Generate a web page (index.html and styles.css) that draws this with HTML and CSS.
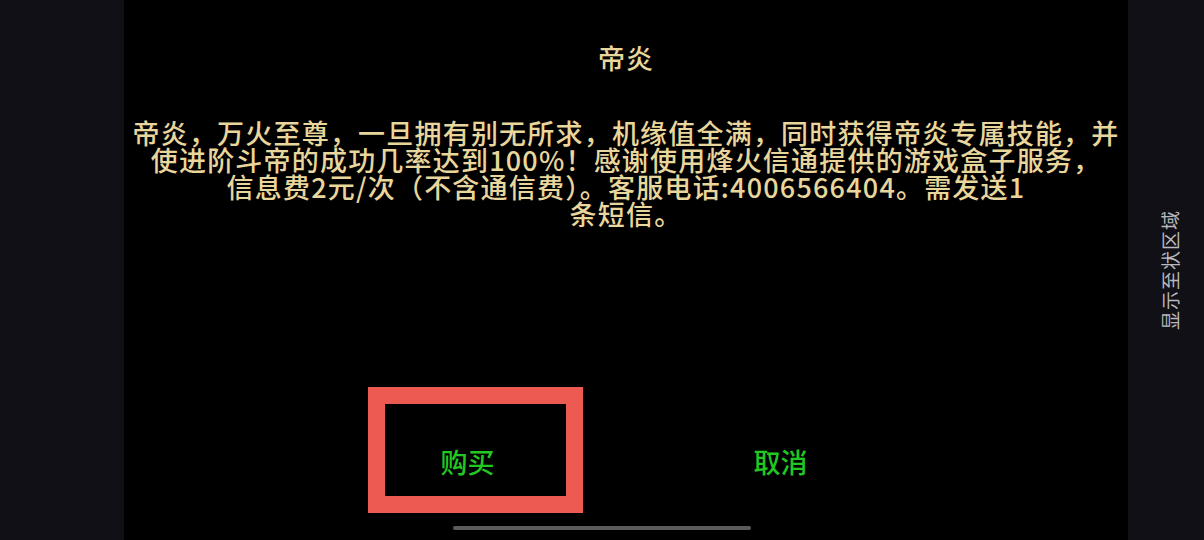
FILE: index.html
```html
<!DOCTYPE html>
<html lang="zh-CN">
<head>
    <meta charset="UTF-8">
    <meta name="viewport" content="width=device-width, initial-scale=1.0">
    <title>帝炎</title>
    <link rel="stylesheet" href="styles.css">
</head>
<body>

<div class="side side-left"></div>

<div class="screen">
    <h1 class="title">帝炎</h1>

    <div class="message">
        <p>帝炎，万火至尊，一旦拥有别无所求，机缘值全满，同时获得帝炎专属技能，并</p>
        <p>使进阶斗帝的成功几率达到100%！感谢使用烽火信通提供的游戏盒子服务，</p>
        <p>信息费2元/次（不含通信费）。客服电话:4006566404。需发送1</p>
        <p>条短信。</p>
    </div>

    <div class="actions">
        <button class="action">购买</button>
        <button class="action">取消</button>
    </div>

    <!-- annotation box around the buy button -->
    <div class="highlight"></div>
</div>

<div class="side side-right">
    <span class="side-label">显示至状区域</span>
</div>

<div class="home-bar"></div>

</body>
</html>
```

FILE: styles.css
```css
body {
    margin: 0;
    padding: 0;
    height: 540px;
    display: flex;
    background-color: #000;
    font-family: "Noto Sans CJK SC", "Noto Sans", sans-serif;
    overflow: hidden;
    position: relative;
}

.side {
    background-color: #101016;
}
.side-left {
    width: 124px;
}
.side-right {
    width: 76px;
    display: flex;
    align-items: center;
    justify-content: center;
}
.side-label {
    writing-mode: vertical-rl;
    text-orientation: sideways;
    transform: rotate(180deg);
    color: #b8b8be;
    font-size: 19px;
    letter-spacing: 1px;
    margin-left: 6px;
}

.screen {
    flex: 1;
    display: flex;
    flex-direction: column;
    align-items: center;
    position: relative;
    color: #e8d69c;
}

.title {
    margin: 44px 0 0 0;
    font-size: 27px;
    font-weight: 500;
    line-height: 28px;
    letter-spacing: 1px;
}

.message {
    margin-top: 47px;
    text-align: center;
    font-size: 27px;
    font-weight: 500;
    line-height: 27px;
    letter-spacing: 1.2px;
}
.message p {
    margin: 0;
    height: 27px;
    white-space: nowrap;
}

.actions {
    margin-top: auto;
    margin-bottom: 49px;
    display: flex;
    gap: 113px;
    margin-left: -4px;
}
.action {
    width: 200px;
    height: 60px;
    background: none;
    border: none;
    color: #22c822;
    font-family: inherit;
    font-size: 27px;
    font-weight: 500;
    padding: 0;
}

.highlight {
    position: absolute;
    left: 244px;
    top: 387px;
    width: 181px;
    height: 92px;
    border: 17px solid #ec5a52;
}

.home-bar {
    position: absolute;
    left: 453px;
    top: 526px;
    width: 298px;
    height: 4px;
    border-radius: 2px;
    background-color: #5c5c5c;
}
```
